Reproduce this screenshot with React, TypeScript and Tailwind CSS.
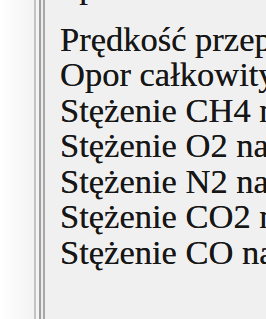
const rows = [
  "Prędkość przepływu",
  "Opor całkowity",
  "Stężenie CH4 na wylocie",
  "Stężenie O2 na wylocie",
  "Stężenie N2 na wylocie",
  "Stężenie CO2 na wylocie",
  "Stężenie CO na wylocie",
];

export default function App() {
  return (
    <div className="flex w-[266px] h-[319px] overflow-hidden bg-[#f0f0f0]">
      {/* window frame on the left */}
      <div className="w-[34px] h-full bg-gradient-to-r from-white to-[#f3f3f3]"></div>
      <div className="w-[2px] h-full bg-[#c4c4c4]"></div>
      <div className="w-[3px] h-full bg-[#f4f4f4]"></div>
      <div className="w-[2px] h-full bg-[#a0a0a0]"></div>
      <div className="w-[2px] h-full bg-[#ececec]"></div>
      <div className="w-[2px] h-full bg-[#a8a8a8]"></div>

      <div className="flex-1 min-w-0 overflow-hidden pl-[15px]">
        <div className="-mt-[31px] [font-family:Liberation_Serif,Times_New_Roman,serif] text-[34.5px] leading-[35.5px] text-[#161616] [text-shadow:0_0_0.6px_rgba(0,0,0,0.7)]">
          {/* previous item, scrolled out of view */}
          <div className="whitespace-nowrap mb-[17px]">Spadek ciśnienia</div>
          {rows.map((r) => (
            <div key={r} className="whitespace-nowrap">{r}</div>
          ))}
        </div>
      </div>
    </div>
  );
}
